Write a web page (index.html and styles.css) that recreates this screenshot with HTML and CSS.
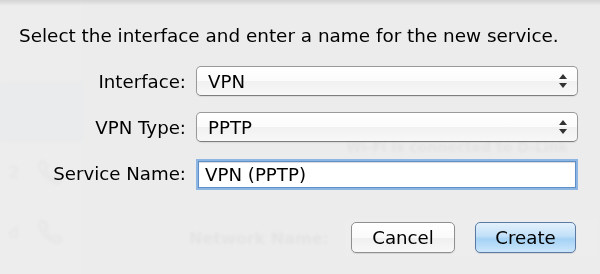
FILE: index.html
```html
<!DOCTYPE html>
<html lang="en">
<head>
  <meta charset="UTF-8" />
  <title>New Service</title>
  <link rel="stylesheet" href="styles.css">
</head>
<body>
  <div class="window">
    <!-- janela de fundo, vista através da folha -->
    <div class="backdrop">
      <div class="sidebar">
        <div class="side-row selected"></div>
        <div class="side-row"><span class="side-text">2</span><svg class="phone" viewBox="0 0 24 24"><path d="M6 3c-2 1-3 3-2 6 2 5 6 9 11 11 3 1 5 0 6-2l-3-3-3 2c-3-1-6-4-7-7l2-3z"/></svg></div>
        <div class="side-row"><span class="side-text">d</span><svg class="phone" viewBox="0 0 24 24"><path d="M6 3c-2 1-3 3-2 6 2 5 6 9 11 11 3 1 5 0 6-2l-3-3-3 2c-3-1-6-4-7-7l2-3z"/></svg></div>
      </div>
      <div class="main">
        <div class="status">Wi-Fi is connected to D-Link</div>
        <div class="net-row">
          <span>Network Name:</span>
          <span class="net-box"></span>
        </div>
      </div>
    </div>

    <div class="sheet">
      <p class="prompt">Select the interface and enter a name for the new service.</p>
      <div class="form">
        <label class="lbl">Interface:</label>
        <div class="popup">
          <span>VPN</span>
          <svg class="arrows" viewBox="0 0 8 14"><path d="M4 0L8 5H0z M4 14L8 9H0z"/></svg>
        </div>

        <label class="lbl">VPN Type:</label>
        <div class="popup">
          <span>PPTP</span>
          <svg class="arrows" viewBox="0 0 8 14"><path d="M4 0L8 5H0z M4 14L8 9H0z"/></svg>
        </div>

        <label class="lbl" for="svcName">Service Name:</label>
        <input class="field" id="svcName" type="text" value="VPN (PPTP)" spellcheck="false" />
      </div>

      <div class="buttons">
        <button class="btn">Cancel</button>
        <button class="btn default">Create</button>
      </div>
    </div>
  </div>
</body>
</html>
```

FILE: styles.css
```css
body {
  margin: 0;
  background: #ebebeb;
  font-family: "DejaVu Sans", "Liberation Sans", sans-serif;
  color: #000;
}

.window {
  position: relative;
  width: 600px;
  height: 274px;
  overflow: hidden;
}

/* fundo */
.backdrop {
  display: flex;
  height: 100%;
  filter: blur(1.4px);
}

.sidebar {
  width: 83px;
  background: #f2f2f2;
  border-right: 1px solid #d8d8d8;
  padding-top: 82px;
}

.side-row {
  height: 60px;
  display: flex;
  align-items: center;
  justify-content: flex-end;
  gap: 16px;
  padding-right: 18px;
  color: #555;
  font-size: 16px;
  white-space: nowrap;
}

.side-row.selected {
  background: #b9cde6;
}

.phone {
  width: 30px;
  height: 30px;
  fill: none;
  stroke: #666;
  stroke-width: 1.5;
}

.main {
  flex: 1;
  padding: 139px 0 0 105px;
  color: #444;
  font-size: 16px;
  font-weight: bold;
  overflow: hidden;
}

.status {
  margin-left: 157px;
  font-size: 14px;
  white-space: nowrap;
}

.net-row {
  display: flex;
  align-items: center;
  gap: 14px;
  margin-top: 62px;
  white-space: nowrap;
}

.net-box {
  width: 280px;
  height: 40px;
  border: 1px solid #aaa;
  background: #fff;
}

/* folha */
.sheet {
  position: absolute;
  inset: 0;
  background: linear-gradient(#d4d4d4, rgba(236, 236, 236, 0.95) 6px);
  padding: 0 22px 0 19px;
}

.prompt {
  margin: 25px 0 0;
  font-size: 18.4px;
  white-space: nowrap;
}

.form {
  display: grid;
  grid-template-columns: 167px 382px;
  grid-auto-rows: 30px;
  column-gap: 10px;
  row-gap: 16px;
  align-items: center;
  margin-top: 20px;
  font-size: 18.2px;
}

.lbl {
  text-align: right;
}

.popup {
  box-sizing: border-box;
  height: 30px;
  border: 1px solid #9a9a9a;
  border-bottom-color: #7e7e7e;
  border-radius: 5px;
  background: linear-gradient(#ffffff, #fbfbfb 50%, #f1f1f1 51%, #f8f8f8);
  display: flex;
  align-items: center;
  justify-content: space-between;
  padding: 0 10px 0 11px;
  box-shadow: 0 1px 1px rgba(0, 0, 0, 0.08);
}

.arrows {
  width: 8px;
  height: 14px;
  fill: #333;
}

.field {
  box-sizing: border-box;
  height: 27px;
  margin: 2px 0 0;
  padding: 0 6px;
  border: 1px solid #5d8fc9;
  outline: none;
  box-shadow: 0 0 0 2px #8db6e3, inset 0 1px 1px rgba(0, 0, 0, 0.15);
  font-family: inherit;
  font-size: 18.2px;
  color: #000;
  width: 378px;
  justify-self: center;
}

.buttons {
  display: flex;
  justify-content: flex-end;
  gap: 20px;
  margin: 34px 2px 0 0;
}

.btn {
  box-sizing: border-box;
  height: 31px;
  padding: 0;
  border: 1px solid #8f8f8f;
  border-radius: 5px;
  background: linear-gradient(#ffffff, #fafafa 50%, #efefef 51%, #f8f8f8);
  font-family: inherit;
  font-size: 18.2px;
  color: #000;
  width: 104px;
  box-shadow: 0 1px 1px rgba(0, 0, 0, 0.1);
}

.btn.default {
  width: 101px;
  border-color: #5a7aa4;
  background: linear-gradient(#e3f1fc, #c2e0f8 45%, #a5d2f5 55%, #cbe6fb);
}
```
